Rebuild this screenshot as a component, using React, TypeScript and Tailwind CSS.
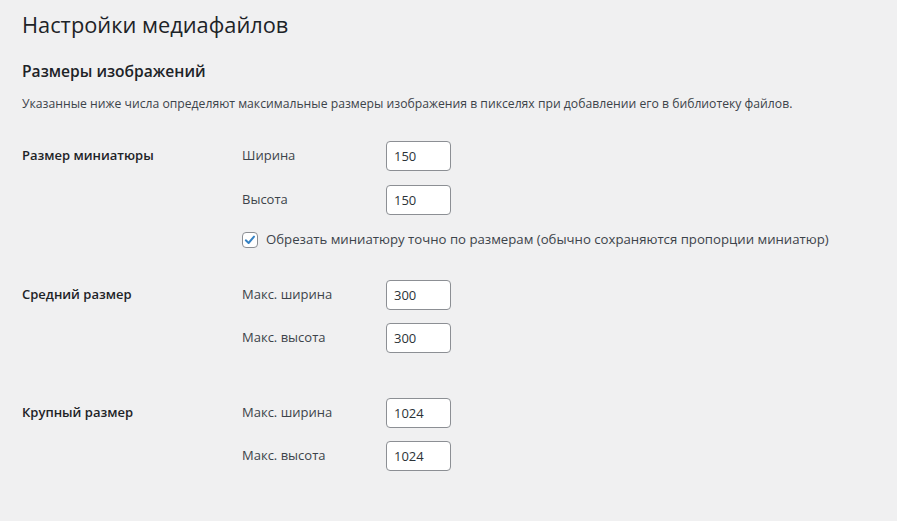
import { useState } from "react";

const font = { fontFamily: '"Open Sans", "Noto Sans", sans-serif' };

const SizeInput = ({ label, value }: { label: string; value: string }) => (
  <div className="flex items-center h-[30px]">
    <label className="w-[144px] text-[13px] text-[#3c434a]">{label}</label>
    <input
      type="text"
      defaultValue={value}
      className="w-[65px] h-[30px] rounded-[4px] border border-[#8c8f94] bg-white px-[7px] text-[13px] text-[#2c3338] outline-none"
    />
  </div>
);

const Row = ({
  title,
  children,
  pb = "pb-[15px]",
  gap = "gap-[14px]",
}: {
  title: string;
  children: React.ReactNode;
  pb?: string;
  gap?: string;
}) => (
  <div className="flex">
    <div className="w-[210px] pt-[20px] text-[13px] font-semibold leading-[18px] text-[#1d2327]">{title}</div>
    <div className={`px-[10px] pt-[15px] ${pb} flex flex-col ${gap}`}>{children}</div>
  </div>
);

export default function App() {
  const [crop, setCrop] = useState(true);
  return (
    <div className="h-screen bg-[#f0f0f1] overflow-hidden" style={font}>
      <div className="ml-[22px] pt-[10px]">
        <h1 className="pb-[4px] text-[21.8px] leading-[30px] font-normal text-[#1d2327]">Настройки медиафайлов</h1>
        <h2 className="mt-[15px] text-[15.6px] leading-[24px] font-semibold text-[#1d2327]">Размеры изображений</h2>
        <p className="mt-[12px] text-[12.2px] leading-[18px] text-[#3c434a]">
          Указанные ниже числа определяют максимальные размеры изображения в пикселях при добавлении его в библиотеку файлов.
        </p>
        <div className="mt-[13px]">
          <Row title="Размер миниатюры">
            <SizeInput label="Ширина" value="150" />
            <SizeInput label="Высота" value="150" />
            <label className="flex items-center gap-[8px] mt-[1px] text-[13.2px] text-[#3c434a] cursor-pointer">
              <span
                onClick={() => setCrop(!crop)}
                className="w-[16px] h-[16px] rounded-[4px] border border-[#8c8f94] bg-white flex items-center justify-center"
              >
                {crop && (
                  <svg viewBox="0 0 16 16" className="w-[14px] h-[14px]">
                    <polyline points="3.2,8.4 6.4,11.4 12.6,4.2" fill="none" stroke="#3582c4" strokeWidth="2.3" strokeLinecap="round" strokeLinejoin="round" />
                  </svg>
                )}
              </span>
              Обрезать миниатюру точно по размерам (обычно сохраняются пропорции миниатюр)
            </label>
          </Row>
          <Row title="Средний размер" pb="pb-[30px]" gap="gap-[13px]">
            <SizeInput label="Макс. ширина" value="300" />
            <SizeInput label="Макс. высота" value="300" />
          </Row>
          <Row title="Крупный размер" gap="gap-[13px]">
            <SizeInput label="Макс. ширина" value="1024" />
            <SizeInput label="Макс. высота" value="1024" />
          </Row>
        </div>
      </div>
    </div>
  );
}
